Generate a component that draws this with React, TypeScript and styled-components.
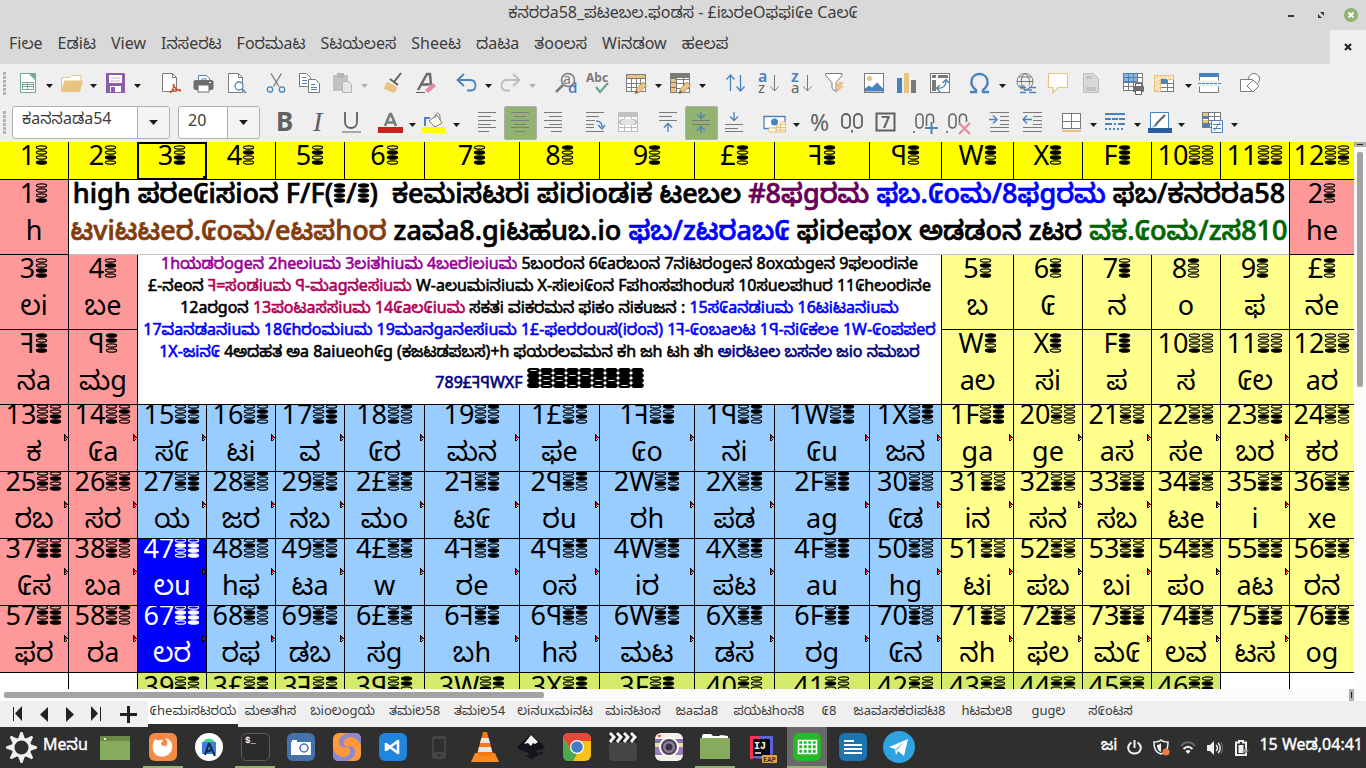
import React from 'react';
import styled, { createGlobalStyle, css } from 'styled-components';

const GlobalStyle = createGlobalStyle`
  * { box-sizing: border-box; }
  html, body { margin: 0; padding: 0; }
  body { overflow: hidden; }
  button, input { font: inherit; color: inherit; margin: 0; padding: 0; border: 0; background: none; }
`;

const Desktop = styled.div`
  display: flex;
  flex-direction: column;
  height: 100vh;
  background: #efefef;
  color: #3c3c3c;
  font-family: 'Noto Sans', 'Noto Sans Kannada', 'Open Sans', sans-serif;
  font-size: 16px;
`;

/* ---------- window frame ---------- */
const TitleBar = styled.header`
  display: grid;
  grid-template-columns: 1fr auto 1fr;
  height: 30px;
  background: #d9d9d9;
`;
const Title = styled.h1`
  grid-column: 2;
  margin: 0;
  font-size: 16px;
  font-weight: 400;
  line-height: 24px;
  white-space: nowrap;
`;
const WindowButtons = styled.div`
  display: flex;
  justify-content: flex-end;
  align-items: center;
  gap: 10px;
  padding-right: 5px;
`;
const WindowButton = styled.button`
  display: flex;
  align-items: center;
  justify-content: center;
  width: 20px;
  height: 20px;
`;
const MenuBar = styled.nav`
  display: flex;
  justify-content: space-between;
  height: 34px;
  background: #d9d9d9;
`;
const MenuList = styled.div`
  display: flex;
  gap: 15px;
  padding-left: 9px;
`;
const MenuButton = styled.button`
  height: 26px;
  line-height: 26px;
  white-space: nowrap;
`;
const CloseDocument = styled.button`
  display: flex;
  align-items: center;
  justify-content: center;
  width: 36px;
  background: #efefef;
`;

/* ---------- toolbars ---------- */
const Toolbar = styled.div`
  display: flex;
  align-items: center;
  height: 39px;
  flex: none;
`;
const Handle = styled.span`
  width: 3px;
  height: 23px;
  margin-left: 3px;
  margin-right: 5px;
  background: repeating-linear-gradient(#b4b4b4 0 3px, transparent 3px 4px);
`;
const ToolButton = styled.button<{ $on?: boolean }>`
  display: flex;
  align-items: center;
  justify-content: center;
  flex: none;
  width: 33px;
  height: 34px;
  border: 1px solid ${(p) => (p.$on ? '#adadad' : 'transparent')};
  border-radius: 2px;
  background: ${(p) => (p.$on ? '#92b372' : 'transparent')};
`;
const CaretButton = styled.button`
  display: flex;
  align-items: center;
  justify-content: center;
  flex: none;
  width: 11px;
  height: 34px;
  padding-top: 4px;
`;
const Gap = styled.span<{ $w: number }>`
  flex: none;
  width: ${(p) => p.$w}px;
`;
const Combo = styled.div<{ $w: number }>`
  display: flex;
  flex: none;
  width: ${(p) => p.$w}px;
  height: 33px;
  margin-right: 8px;
  border: 1px solid #b0b0b0;
  border-radius: 3px;
  overflow: hidden;
  background: #fff;
`;
const ComboInput = styled.input`
  flex: 1;
  min-width: 0;
  padding: 0 0 6px 9px;
  font-size: 16px;
`;
const ComboArrow = styled.button`
  display: flex;
  align-items: center;
  justify-content: center;
  width: 32px;
  border-left: 1px solid #b0b0b0;
  background: #f4f4f4;
`;

/* ---------- sheet ---------- */
const SheetArea = styled.main`
  display: flex;
  flex: 1 1 0;
  min-height: 0;
`;
const SheetView = styled.div`
  flex: 1;
  min-width: 0;
  overflow: hidden;
  background: #fff;
`;
const Table = styled.table`
  width: 100%;
  table-layout: fixed;
  border-collapse: separate;
  border-spacing: 0;
  color: #000;
`;
type Tone = 'yellow' | 'pink' | 'blue' | 'cream' | 'selected' | 'lime' | 'blank';
const tones: Record<Tone, string> = {
  yellow: '#ffff00',
  pink: '#ff9999',
  blue: '#99ccff',
  cream: '#ffff8c',
  selected: '#0000ff',
  lime: '#d4ea6b',
  blank: '#ffffff',
};
const Cell = styled.td<{ $tone: Tone; $gridLine?: boolean }>`
  position: relative;
  padding: 0;
  border-right: 1px solid #000;
  border-bottom: 1px solid ${(p) => (p.$gridLine ? '#c0c0c0' : '#000')};
  background: ${(p) => tones[p.$tone]};
  color: ${(p) => (p.$tone === 'selected' ? '#fff' : '#000')};
  &:last-child { border-right: 0; }
`;
const CellBody = styled.div<{ $h: number }>`
  display: flex;
  flex-direction: column;
  align-items: center;
  justify-content: center;
  height: ${(p) => p.$h}px;
  overflow: hidden;
`;
const lineBase = css`
  flex: none;
  white-space: pre;
`;
const CellLine = styled.div`
  ${lineBase}
  height: 37px;
  font-size: 27px;
  line-height: 26px;
`;
const HeadLine = styled(CellLine)`
  font-weight: 550;
  -webkit-text-stroke: 0.7px currentColor;
`;
const NoteLine = styled.div<{ $h: number }>`
  ${lineBase}
  height: ${(p) => p.$h}px;
  font-size: 16px;
  font-weight: 400;
  line-height: ${(p) => (p.$h > 22 ? 34 : 16)}px;
  -webkit-text-stroke: 0.6px currentColor;
`;
const Ink = styled.span<{ $c: string }>`
  color: ${(p) => p.$c};
`;
const DotSvg = styled.svg`
  display: inline-block;
  vertical-align: baseline;
`;
const Marker = styled.svg`
  position: absolute;
  right: 0;
  top: 29px;
`;
const CellCursor = styled.span`
  position: absolute;
  inset: 0 -1px -1px -1px;
  border: 2px solid #000;
  &::after {
    content: '';
    position: absolute;
    right: -3px;
    bottom: -3px;
    width: 5px;
    height: 5px;
    background: #000;
  }
`;
const VScroll = styled.div`
  display: flex;
  flex-direction: column;
  align-items: center;
  width: 12px;
  background: #fcfcfc;
`;
const VSplit = styled.div`
  display: flex;
  align-items: center;
  justify-content: center;
  width: 100%;
  height: 5px;
  margin-bottom: 5px;
  background: #b0b0b0;
  &::after { content: ''; width: 6px; height: 1px; background: #222; }
`;
const VThumb = styled.div`
  width: 6px;
  height: 43%;
  border-radius: 2px;
  background: #a3a3a3;
`;
const HScroll = styled.div`
  display: flex;
  align-items: center;
  justify-content: space-between;
  flex: none;
  height: 12px;
  padding-left: 4px;
  padding-right: 12px;
  background: #fcfcfc;
`;
const HThumb = styled.div`
  width: 40%;
  height: 6px;
  border-radius: 2px;
  background: #a3a3a3;
`;
const HSplit = styled.div`
  display: flex;
  align-items: center;
  justify-content: center;
  width: 5px;
  height: 12px;
  background: #b0b0b0;
  &::after { content: ''; width: 1px; height: 6px; background: #222; }
`;

/* ---------- sheet tabs ---------- */
const TabBar = styled.div`
  display: flex;
  flex: none;
  height: 26px;
  background: #efefef;
`;
const TabNav = styled.div`
  display: flex;
  align-items: center;
  width: 148px;
  padding-left: 5px;
`;
const TabNavButton = styled.button<{ $w?: number }>`
  display: flex;
  align-items: center;
  justify-content: center;
  width: ${(p) => p.$w ?? 26}px;
  height: 24px;
`;
const Tab = styled.button<{ $w: number; $active?: boolean }>`
  flex: none;
  width: ${(p) => p.$w}px;
  padding-bottom: 5px;
  font-size: 13px;
  line-height: 18px;
  white-space: nowrap;
  background: ${(p) => (p.$active ? '#fff' : 'transparent')};
  border-bottom: 3px solid ${(p) => (p.$active ? '#2e2e2e' : 'transparent')};
`;

/* ---------- desktop panel ---------- */
const Panel = styled.footer`
  display: flex;
  flex: none;
  align-items: stretch;
  height: 41px;
  background: #2f2f2f;
  color: #fff;
`;
const StartMenu = styled.button`
  display: flex;
  align-items: center;
  width: 97px;
  padding-left: 6px;
  gap: 6px;
`;
const PanelText = styled.span`
  height: 32px;
  line-height: 24px;
  white-space: nowrap;
  -webkit-text-stroke: 0.4px currentColor;
`;
const Launchers = styled.div`
  display: flex;
  gap: 6px;
  flex: 1;
`;
const Launcher = styled.button<{ $running?: boolean; $focus?: boolean }>`
  display: flex;
  align-items: center;
  justify-content: center;
  flex: none;
  width: 40px;
  border-bottom: 2px solid ${(p) => (p.$running ? '#92b372' : 'transparent')};
  background: ${(p) => (p.$focus ? '#696969' : 'transparent')};
`;
const Tray = styled.div`
  display: flex;
  align-items: center;
  gap: 7px;
  padding-right: 3px;
`;
const TrayButton = styled.button`
  display: flex;
  width: 20px;
  justify-content: center;
`;

/* ---------- drawing helpers ---------- */
const G = '#7a7a7a';
const B = '#4a82bd';
const O = '#eac282';
const K = '#606060';

const lines = (rows: [number, number, number][], c = G) =>
  rows.map(([x1, x2, y], i) => <path key={i} d={`M${x1} ${y}.5H${x2}`} stroke={c} />);

const grid = (x: number, y: number, w: number, h: number, cols: number, rows: number, c = G) => (
  <g stroke={c} fill="none">
    <rect x={x + 0.5} y={y + 0.5} width={w} height={h} fill="#fff" />
    {Array.from({ length: cols - 1 }, (_, i) => (
      <path key={'c' + i} d={`M${Math.round(x + ((i + 1) * w) / cols) + 0.5} ${y}v${h}`} />
    ))}
    {Array.from({ length: rows - 1 }, (_, i) => (
      <path key={'r' + i} d={`M${x} ${Math.round(y + ((i + 1) * h) / rows) + 0.5}h${w}`} />
    ))}
  </g>
);

const pencil = (
  <g>
    <path d="M9 20.500l1.500-5 6.500-6.500 3.500 3.500-6.500 6.500z" fill={O} stroke="#b48a4e" strokeWidth=".8" />
    <path d="M9 20.500l1-3.500 2.500 2.500z" fill={K} />
  </g>
);

const icons: Record<string, React.ReactNode> = {
  new: (
    <g fill="none" stroke="#76a797">
      <path d="M3.500 .5h11l4 4v15h-15z" fill="#fff" />
      <path d="M12 .5h6.500v6.500z" fill="#76a797" />
      <path d="M5.500 9.500h11v7h-11zM5.500 13.500h11M10.500 9.500v7M5.500 11.500h11" />
    </g>
  ),
  open: (
    <g stroke={O}>
      <path d="M.5 18.500v-14h8l2-2h9.500v8" fill="#fff" />
      <path d="M.5 18.500l3-10.500h18l-3 10.500z" fill={O} />
    </g>
  ),
  save: (
    <g>
      <path d="M1 0h18l1 1v19H1z" fill="#8e5bb0" />
      <path d="M4 2h13v8H4zM5 13h11v6H5z" fill="#fff" />
      <path d="M6 5h9M6 8h9" stroke="#c7aedb" />
      <path d="M6 14h4v5H6z" fill="#8e5bb0" />
    </g>
  ),
  pdf: (
    <g fill="none" stroke={G}>
      <path d="M2.500 .5h10l4 4v14h-14z" fill="#fff" />
      <path d="M12.500 .5v4h4" />
      <path d="M13 11c1 3 3 6 8 7M14 11c0 4-1 6-4 9M10 19c3-2 6-3 11-2" stroke="#cf4b2c" strokeWidth="1.300" />
    </g>
  ),
  print: (
    <g>
      <path d="M5.500 8V2.500h8l3 3V8" fill="#fff" stroke={B} />
      <path d="M8 6h6" stroke={B} />
      <rect y="7" x=".5" width="20" height="10" rx="2" fill="#6d6d6d" />
      <path d="M5 12h11v7H5z" fill="#fff" stroke="#6d6d6d" />
      <path d="M16 9.500h2" stroke="#fff" />
    </g>
  ),
  preview: (
    <g fill="none">
      <path d="M2.500 .5h10l4 4v15h-14z" fill="#fff" stroke={G} />
      <path d="M12.500 .5v4h4" stroke={G} />
      <circle cx="13" cy="13" r="4" fill="#fff" stroke={B} strokeWidth="1.300" />
      <path d="M16 16l4 4" stroke={B} strokeWidth="1.600" />
    </g>
  ),
  cut: (
    <g fill="none" strokeWidth="1.300">
      <path d="M5 .5l8 13M15.500 .5l-8 13" stroke={G} />
      <circle cx="4" cy="16.500" r="2.700" stroke={B} />
      <circle cx="16" cy="16.500" r="2.700" stroke={B} />
    </g>
  ),
  copy: (
    <g fill="#fff" stroke={G}>
      <path d="M.5 .5h7l4 4v9h-11z" />
      <path d="M9.500 6.500h7l4 4v9h-11z" />
      <path d="M3 4.500h4M3 7.500h5M3 10.500h5M12 11.500h4M12 14.500h6M12 16.500h6" stroke={B} />
    </g>
  ),
  paste: (
    <g>
      <path d="M1 2h15v16H1z" fill="#c2c2c2" />
      <path d="M5 0h7v5H5z" fill="#b4b4b4" />
      <path d="M10.500 8.500h6l3 3v8h-9z" fill="#e6e6e6" stroke="#b4b4b4" />
    </g>
  ),
  brush: (
    <g>
      <path d="M18 0l-7 9M7 6l8 6" stroke={K} strokeWidth="2" />
      <path d="M5 9c-2 0-3 3-4 7l10 4c2-2 3-4 3-6z" fill={O} />
    </g>
  ),
  clear: (
    <g>
      <path d="M2 17L11 1h3l1 11M5.500 11.500h8" stroke="#6a6a6a" strokeWidth="2.500" fill="none" />
      <path d="M0 19.500h9" stroke={K} />
      <path d="M9 17l8-7 3 3-8 7z" fill="#e8889b" />
    </g>
  ),
  undo: (
    <g fill="none" stroke={B} strokeWidth="1.800">
      <path d="M1.500 7H15c6 1 6 10 0 10.500h-4" />
      <path d="M8 1L1.500 7 8 13" />
    </g>
  ),
  redo: (
    <g fill="none" stroke="#bcbcbc" strokeWidth="1.800">
      <path d="M19.500 7H6c-6 1-6 10 0 10.500h4" />
      <path d="M13 1l6.500 6L13 13" />
    </g>
  ),
  find: (
    <g fill="none" stroke={G}>
      <circle cx="13" cy="7" r="6.500" strokeWidth="1.500" />
      <path d="M8 12l-7 7" strokeWidth="2.500" />
      <text x="8" y="11" fontSize="14" fill={G} stroke="none">a</text>
      <text x="13" y="20" fontSize="15" fontWeight="600" fill={B} stroke="none">d</text>
    </g>
  ),
  spell: (
    <g>
      <text x="-2" y="9" fontSize="12" fontWeight="700" fill={G}>Abc</text>
      <path d="M8 14l4 5 8-9" stroke="#69a58c" strokeWidth="2.200" fill="none" />
    </g>
  ),
  row: (
    <g>
      {grid(0, 1, 19, 17, 4, 4)}
      <path d="M.5 1.500h19v4H.5z" fill={O} stroke={G} />
      {pencil}
    </g>
  ),
  col: (
    <g>
      {grid(0, 1, 19, 18, 3, 4)}
      <path d="M0 0h20v5H0z" fill={G} />
      <path d="M.5 5.500h6v14h-6zM.5 9.500h6M.5 14.500h6" fill={O} stroke={G} />
      {pencil}
    </g>
  ),
  sort: (
    <g fill="none" stroke={B} strokeWidth="1.300">
      <path d="M5.500 18V2M1.500 6.500l4-4.500 4 4.500M15.500 2v16M11.500 13.500l4 4.500 4-4.500" />
    </g>
  ),
  az: (
    <g>
      <text x="0" y="9" fontSize="16" fontWeight="600" fill={B}>a</text>
      <text x="0" y="20" fontSize="15" fill={K}>z</text>
      <path d="M16.500 2v16M12.500 13.500l4 4.500 4-4.500" fill="none" stroke={G} />
    </g>
  ),
  za: (
    <g>
      <text x="0" y="9" fontSize="16" fontWeight="600" fill={B}>z</text>
      <text x="0" y="20" fontSize="15" fill={K}>a</text>
      <path d="M16.500 2v16M12.500 13.500l4 4.500 4-4.500" fill="none" stroke={G} />
    </g>
  ),
  filter: (
    <g>
      <path d="M1.500 .5h16.500v2l-6 7v9l-4-3v-6l-6.500-7z" fill="#fff" stroke={G} />
      <path d="M15 9h5l-3 4h3l-8 7 2-6h-3z" fill={O} />
    </g>
  ),
  image: (
    <g>
      <rect x=".5" y=".5" width="19" height="19" fill="#fff" stroke={G} />
      <circle cx="5.500" cy="5.500" r="2.500" fill={O} />
      <path d="M1 18.500v-3l4-3 3 2 5-5 6 6v3z" fill={B} />
    </g>
  ),
  chart: (
    <g>
      <path d="M0 5h5v15H0z" fill={B} />
      <path d="M7 0h5v20H7z" fill={O} />
      <path d="M14 7h5v13h-5z" fill={G} />
    </g>
  ),
  pivot: (
    <g fill="none" stroke={G}>
      <rect x=".5" y=".5" width="19" height="19" fill="#fff" />
      <path d="M2 2h4v3H2zM8 2h10v3H8zM2 7h4v11H2z" fill={G} stroke="none" />
      <path d="M7 15c6 1 9-2 9-8M10 12l-3.500 3 3.500 4M12.500 10L16 6.500 19 10" stroke={B} strokeWidth="1.300" />
    </g>
  ),
  omega: (
    <path
      d="M0 19h6v-2C2 14 1 11 1.500 8 2 3.500 5.500 1 9.500 1s7.500 2.500 8 7c.5 3-.5 6-4.500 9v2h6"
      fill="none"
      stroke={B}
      strokeWidth="2.400"
    />
  ),
  link: (
    <g fill="none" stroke={G}>
      <circle cx="8" cy="8.500" r="8" />
      <path d="M0 8.500h16M2 4h12M2 13h6M8 .5c-5 4-5 11 0 16M8 .5c5 4 5 9 4 12" />
      <path d="M3 14.500h6M12 14.500h7M7 17h8M3 19.500h6M12 19.500h7" stroke={B} strokeWidth="1.600" />
    </g>
  ),
  comment: <path d="M-1.500 .5h19v14H8l-5 5v-5h-4.500z" fill="#fff" stroke={O} strokeWidth="1.200" />,
  headfoot: (
    <g>
      <path d="M.5 .5h10l5 5v14H.5z" fill="#d8d8d8" stroke="#bdbdbd" />
      <path d="M3 3h6v3H3zM3 14h10v4H3z" fill="#c2c2c2" />
    </g>
  ),
  printarea: (
    <g>
      {grid(0, 0, 19, 17, 4, 4)}
      <path d="M.5 .5h14v8H.5zM5.500 .5v8M10.500 .5v8M.5 4.500h14" fill="#8eb4de" stroke={B} />
      <rect x="10" y="13" width="11" height="6" rx="1" fill="#6d6d6d" />
      <path d="M12.500 13v-2.500h6V13M12.500 17.500h6v4h-6z" fill="#fff" stroke={K} />
    </g>
  ),
  freeze: (
    <g>
      {grid(-2, 2, 19, 16, 3, 4)}
      <path d="M-1.500 2.500h19v4h-13v12h-6z" fill="#fbe9c9" stroke={O} />
      <path d="M-1 6l4-4 4 4 4-4 4 4M-1 10l5-3M-1 14l5-4M-1 18l5-4" stroke={O} fill="none" />
      <path d="M5 6h6v4H5z" fill={B} />
    </g>
  ),
  split: (
    <g>
      <path d="M-1.500 .5h19v8h-19zM-1.500 12.500h19v7h-19z" fill="#fff" stroke={G} />
      <path d="M-2 0h20v4H-2z" fill={B} />
      <path d="M-2 8.500h20M-2 12.500h20" stroke="#efefef" strokeWidth="2" />
      <path d="M-3 10.500h23" stroke={B} strokeDasharray="3 1" />
    </g>
  ),
  shapes: (
    <g fill="#fff" stroke={G}>
      <circle cx="13" cy="6" r="5.500" />
      <path d="M-.5 6.500h12v12h-12z" />
      <path d="M12 7l6 6-6 6-6-6z" />
    </g>
  ),
  bold: <text x="0" y="19" fontSize="26" fontWeight="700" fill={K}>B</text>,
  italic: <text x="4" y="19" fontSize="28" fontStyle="italic" fontFamily="Liberation Serif, serif" fill={K}>I</text>,
  underline: (
    <g fill="none" stroke={K}>
      <path d="M3 0v10c0 8 12 8 12 0V0" strokeWidth="1.800" />
      <path d="M0 20h19" />
    </g>
  ),
  color: (
    <g>
      <path d="M5 14l5-12h1l5 12M7 10.500h7" stroke={G} strokeWidth="2.600" fill="none" />
      <path d="M-2 15h25v6H-2z" fill="#c9211e" />
    </g>
  ),
  fill: (
    <g>
      <path d="M1 14V6h5" stroke={B} strokeWidth="2" fill="none" />
      <path d="M5 9l8-6 5 8-7 4z" fill="#fff" stroke={G} />
      <path d="M11 6c0-7 6-7 5 2" fill="none" stroke={G} />
      <path d="M-2 15h24v6H-2z" fill="#ffff00" />
    </g>
  ),
  left: <g>{lines([[1, 19, 0], [1, 14, 4], [1, 19, 8], [1, 14, 12], [1, 19, 15], [1, 12, 19]])}</g>,
  center: <g>{lines([[1, 19, 0], [4, 16, 4], [1, 19, 8], [4, 16, 12], [1, 19, 15], [5, 15, 19]])}</g>,
  right: <g>{lines([[1, 19, 0], [6, 19, 4], [1, 19, 8], [6, 19, 12], [1, 19, 15], [8, 19, 19]])}</g>,
  wrap: (
    <g>
      {lines([[1, 19, 0], [1, 14, 4], [1, 10, 8], [1, 9, 12], [1, 9, 15], [1, 19, 19]])}
      <path d="M11 9c5 0 6 3 6 6M13 13l4 4 3-4" stroke={B} fill="none" strokeWidth="1.400" />
    </g>
  ),
  merge: (
    <g>
      {grid(0, 0, 19, 19, 3, 5, '#bdbdbd')}
      <path d="M0 0h20v5H0z" fill="#c2c2c2" />
      <path d="M1 7h18v6H1z" fill="#e4e4e4" />
      <path d="M5 7l-4 3 4 3M15 7l4 3-4 3" stroke="#a9a9a9" fill="none" />
    </g>
  ),
  top: (
    <g>
      {lines([[1, 19, 0], [1, 14, 4], [1, 19, 8]])}
      <path d="M10 20v-8M6 15.500l4-4 4 4" stroke={B} fill="none" strokeWidth="1.300" />
    </g>
  ),
  middle: (
    <g>
      {lines([[1, 19, 8], [1, 19, 12]])}
      <path d="M10 0v6M6 2.500l4 4 4-4M10 21v-6M6 18.500l4-4 4 4" stroke={B} fill="none" strokeWidth="1.300" />
    </g>
  ),
  bottom: (
    <g>
      {lines([[1, 19, 12], [1, 14, 16], [1, 19, 19]])}
      <path d="M10 0v8M6 4.500l4 4 4-4" stroke={B} fill="none" strokeWidth="1.300" />
    </g>
  ),
  currency: (
    <g>
      <path d="M0 4.500h21v12H0z" fill="#fff" stroke={B} strokeWidth="1.300" />
      <circle cx="10.500" cy="10" r="3.500" fill={B} />
      <path d="M12.500 13h4v7h-4zM16.500 10h5v10h-5zM5 16h7v4H5z" fill="#fff6e4" stroke={O} />
      <path d="M12.500 15.500h9M12.500 18h9M16.500 12.500h5" stroke={O} />
    </g>
  ),
  percent: <text x="1" y="19" fontSize="23" fill={K}>%</text>,
  number: (
    <g fill="none" stroke={K} strokeWidth="1.800">
      <rect x="0" y="2" width="8" height="14" rx="4" />
      <rect x="12" y="2" width="8" height="14" rx="4" />
      <path d="M10 18v2.500" />
    </g>
  ),
  date: (
    <g>
      <path d="M1.500 1.500h18v17h-18z" fill="none" stroke={K} strokeWidth="2" />
      <text x="6" y="16" fontSize="16" fontWeight="600" fill={K}>7</text>
    </g>
  ),
  adddec: (
    <g fill="none" stroke={K} strokeWidth="1.500">
      <path d="M-1 19v2" />
      <rect x="1" y="2" width="7" height="14" rx="3.500" />
      <path d="M11.500 14V6c0-5 7-5 7 0v5" />
      <path d="M16.500 10v12M10 16h13" stroke={B} strokeWidth="2" />
    </g>
  ),
  deldec: (
    <g fill="none" stroke={K} strokeWidth="1.500">
      <path d="M-1 19v2" />
      <rect x="1" y="2" width="7" height="14" rx="3.500" />
      <path d="M11.500 13V6c0-5 7-5 7 0v4" />
      <path d="M11 11l11 11M22 11L11 22" stroke="#e8889b" strokeWidth="2" />
    </g>
  ),
  indent: (
    <g>
      {lines([[2, 21, 0], [12, 21, 4], [12, 21, 8], [12, 21, 12], [2, 21, 15], [2, 21, 19]])}
      <path d="M1 7.500h8M5 3.500l4 4-4 4" stroke={B} fill="none" strokeWidth="1.400" />
    </g>
  ),
  outdent: (
    <g>
      {lines([[2, 21, 0], [12, 21, 4], [12, 21, 8], [12, 21, 12], [2, 21, 15], [2, 21, 19]])}
      <path d="M2 7.500h9M6 3.500l-4 4 4 4" stroke={B} fill="none" strokeWidth="1.400" />
    </g>
  ),
  borders: (
    <g>
      {grid(1, 1, 18, 15, 2, 2)}
      <path d="M1 18h19v2H1z" fill={O} />
    </g>
  ),
  linestyle: (
    <g stroke={B} strokeWidth="2">
      <path d="M0 2h20" />
      <path d="M0 7h20" strokeDasharray="6 1" />
      <path d="M0 12h20" strokeDasharray="7 2 2 2" />
      <path d="M0 17h20" strokeDasharray="2 2" />
    </g>
  ),
  linecolor: (
    <g>
      <path d="M1.500 .5h18v16h-18z" fill="#fff" stroke={B} />
      <path d="M16 3L7 12" stroke={K} strokeWidth="2" />
      <path d="M3 16l4-5 2 2z" fill={B} />
      <path d="M-1 16h24v5H-1z" fill="#2a6099" />
    </g>
  ),
  condition: (
    <g>
      {grid(0, 0, 18, 15, 3, 4)}
      <path d="M1 1h5v3H1zM1 8h5v3H1z" fill={O} />
      <path d="M1 5h5v2H1zM1 12h7v3H1z" fill={B} />
      <path d="M9.500 8.500h11v12h-11z" fill="#fff" stroke={B} />
      <path d="M11 12.500h8M11 16.500h8M18 10l-6 9" stroke={B} />
    </g>
  ),
};

const Icon = ({ name }: { name: string }) => (
  <svg width="21" height="21" viewBox="0 0 21 21" overflow="visible" aria-hidden="true">
    {icons[name]}
  </svg>
);

const Caret = ({ dim, big }: { dim?: boolean; big?: boolean }) => (
  <svg width={big ? 9 : 7} height={big ? 5 : 4} viewBox="0 0 7 4" aria-hidden="true">
    <path d="M0 0h7L3.500 4z" fill={dim ? '#b4b4b4' : '#1a1a1a'} />
  </svg>
);

type Tool = [name: string, label: string, kind?: 'menu' | 'dim' | 'on'] | number;

const Tools = ({ items }: { items: Tool[] }) => (
  <>
    {items.map((t, i) =>
      typeof t === 'number' ? (
        <Gap key={i} $w={t} />
      ) : (
        <React.Fragment key={i}>
          <ToolButton aria-label={t[1]} $on={t[2] === 'on'}>
            <Icon name={t[0]} />
          </ToolButton>
          {(t[2] === 'menu' || t[2] === 'dim') && (
            <CaretButton aria-label={`${t[1]} options`}>
              <Caret dim={t[2] === 'dim'} />
            </CaretButton>
          )}
        </React.Fragment>
      ),
    )}
  </>
);

const standardTools: Tool[] = [
  ['new', 'New', 'menu'], ['open', 'Open', 'menu'], ['save', 'Save', 'menu'], 11,
  ['pdf', 'Export as PDF'], ['print', 'Print'], ['preview', 'Print preview'], 7,
  ['cut', 'Cut'], ['copy', 'Copy'], ['paste', 'Paste', 'dim'], 7,
  ['brush', 'Clone formatting'], ['clear', 'Clear formatting'], 7,
  ['undo', 'Undo', 'menu'], ['redo', 'Redo', 'dim'], 11,
  ['find', 'Find and replace'], ['spell', 'Spelling'], 5,
  ['row', 'Row', 'menu'], ['col', 'Column', 'menu'], 11,
  ['sort', 'Sort'], ['az', 'Sort ascending'], ['za', 'Sort descending'], ['filter', 'AutoFilter'], 7,
  ['image', 'Insert image'], ['chart', 'Insert chart'], ['pivot', 'Pivot table'], 7,
  ['omega', 'Special character', 'menu'], 3,
  ['link', 'Hyperlink'], ['comment', 'Comment'], ['headfoot', 'Headers and footers'], 7,
  ['printarea', 'Define print area'], ['freeze', 'Freeze rows and columns', 'menu'], 1,
  ['split', 'Split window'], 7, ['shapes', 'Draw functions'],
];

const formatTools: Tool[] = [
  ['bold', 'Bold'], ['italic', 'Italic'], ['underline', 'Underline'], 5,
  ['color', 'Font color', 'menu'], ['fill', 'Background color', 'menu'], 9,
  ['left', 'Align left'], ['center', 'Center horizontally', 'on'], ['right', 'Align right'], 9,
  ['wrap', 'Wrap text'], ['merge', 'Merge cells'], 7,
  ['top', 'Align top'], ['middle', 'Center vertically', 'on'], ['bottom', 'Align bottom'], 7,
  ['currency', 'Currency', 'menu'], 1,
  ['percent', 'Percent'], ['number', 'Number'], ['date', 'Date'], 7,
  ['adddec', 'Add decimal place'], ['deldec', 'Delete decimal place'], 7,
  ['indent', 'Increase indent'], ['outdent', 'Decrease indent'], 7,
  ['borders', 'Borders', 'menu'], ['linestyle', 'Border style', 'menu'], ['linecolor', 'Border color', 'menu'], 9,
  ['condition', 'Conditional formatting', 'menu'],
];

/* ---------- sheet contents ---------- */
const DIGITS = '0123456789£ꟻꟼWXF';

/* Each base-16 digit is shown as a stack of four bits, highest on top. */
const Bits = ({ of, heavy }: { of: string; heavy?: boolean }) => (
  <>
    {[...of].map((ch, i) => {
      const value = DIGITS.indexOf(ch);
      return (
        <DotSvg key={i} width="13" height="20" viewBox="0 0 13 20" aria-hidden="true">
          {[8, 4, 2, 1].map((bit, row) => (
            <ellipse
              key={bit}
              cx="6.500"
              cy={2.5 + row * 5}
              rx={heavy ? 5.2 : 5.1}
              ry={heavy ? 1.8 : 1.7}
              stroke="currentColor"
              strokeWidth={heavy ? 2.4 : 1.2}
              fill={value & bit ? 'currentColor' : 'none'}
            />
          ))}
        </DotSvg>
      );
    })}
  </>
);

const NumberLine = ({ n }: { n: string }) => (
  <CellLine>
    {n}
    <Bits of={n} />
  </CellLine>
);

const Element = ({ n, s, tone, h = 66, note }: { n: string; s: string; tone: Tone; h?: number; note?: boolean }) => (
  <Cell $tone={tone}>
    <CellBody $h={h}>
      <NumberLine n={n} />
      <CellLine>{s}</CellLine>
    </CellBody>
    {note && (
      <Marker width="4" height="7" viewBox="0 0 4 7" aria-hidden="true">
        <path d="M0 0h1v7H0zM1 1h1v1H1zM2 2h1v1H2zM3 3h1v1H3zM2 5h1v1H2zM1 6h1v1H1z" fill="#000" />
        <path d="M1 2h1v3H1zM2 3h1v1H2z" fill="#ff0000" />
      </Marker>
    )}
  </Cell>
);

const widths = [69, 69, 69, 69, 69, 80, 95, 80, 95, 80, 95, 72, 72, 69, 69, 69, 69, 64];
const headings = '1 2 3 4 5 6 7 8 9 £ ꟻ ꟼ W X F 10 11 12'.split(' ');

const periods = [
  '13 ಕ,14 ₢a,15 ಸ₢,16 ಟi,17 ವ,18 ₢ರ,19 ಮನ,1£ ಫe,1ꟻ ₢o,1ꟼ ನi,1W ₢u,1X ಜನ,1F ga,20 ge,21 aಸ,22 ಸe,23 ಬರ,24 ಕರ',
  '25 ರಬ,26 ಸರ,27 ಯ,28 ಜರ,29 ನಬ,2£ ಮo,2ꟻ ಟ₢,2ꟼ ರu,2W ರh,2X ಪಡ,2F ag,30 ₢ಡ,31 iನ,32 ಸನ,33 ಸಬ,34 ಟe,35 i,36 xe',
  '37 ₢ಸ,38 ಬa,47 ಲu,48 hಫ,49 ಟa,4£ w,4ꟻ ರe,4ꟼ oಸ,4W iರ,4X ಪಟ,4F au,50 hg,51 ಟi,52 ಪಬ,53 ಬi,54 ಪo,55 aಟ,56 ರನ',
  '57 ಫರ,58 ರa,67 ಲರ,68 ರಫ,69 ಡಬ,6£ ಸg,6ꟻ ಬh,6ꟼ hಸ,6W ಮಟ,6X ಡಸ,6F ರg,70 ₢ನ,71 ನh,72 ಫಲ,73 ಮ₢,74 ಲವ,75 ಟಸ,76 og',
].map((row) => row.split(',').map((c) => c.split(' ')));

const toneFor = (row: number, col: number): Tone => {
  if (col < 2) return 'pink';
  if (col === 2 && row > 1) return 'selected';
  return col < 12 ? 'blue' : 'cream';
};

const lastRow = ['', '', '39', '3£', '3ꟻ', '3ꟼ', '3W', '3X', '3F', '40', '41', '42', '43', '44', '45', '46', '', ''];

const purple = '#990099';
const crimson = '#b00055';
const blue = '#0000ff';
const navy = '#000080';

const Sheet = () => (
  <Table>
    <colgroup>
      {widths.map((w, i) => (
        <col key={i} width={w} />
      ))}
    </colgroup>
    <tbody>
      <tr>
        {headings.map((n, i) => (
          <Cell key={n} $tone="yellow">
            <CellBody $h={37}>
              <NumberLine n={n} />
            </CellBody>
            {i === 2 && <CellCursor />}
          </Cell>
        ))}
      </tr>
      <tr>
        <Element n="1" s="h" tone="pink" h={74} />
        <Cell $tone="blank" colSpan={16} $gridLine>
          <CellBody $h={74}>
            <HeadLine>
              high ಪರe₢iಸioನ F/F(<Bits of="F" />/<Bits of="F" />){'  '}ಕeಮiಸಟರi ಪiರioಡiಕ ಟeಬಲ{' '}
              <Ink $c="#660055">#8ಫgರಮ</Ink> <Ink $c={blue}>ಫಬ.₢oಮ/8ಫgರಮ</Ink> ಫಬ/ಕನರರa58
            </HeadLine>
            <HeadLine>
              <Ink $c="#843c0c">ಟviಟಟeರ.₢oಮ/eಟಪhoರ</Ink> zaವa8.giಟಹuಬ.io <Ink $c={blue}>ಫಬ/zಟರaಬ₢</Ink>
              {' '}ಫiರeಫox ಅಡಡoನ zಟರ <Ink $c="#006600">ವಕ.₢oಮ/zಸ810</Ink>
            </HeadLine>
          </CellBody>
        </Cell>
        <Element n="2" s="he" tone="pink" h={74} />
      </tr>
      <tr>
        <Element n="3" s="ಲi" tone="pink" h={74} />
        <Element n="4" s="ಬe" tone="pink" h={74} />
        <Cell $tone="blank" colSpan={10} rowSpan={2}>
          <CellBody $h={149}>
            <NoteLine $h={22}>
              <Ink $c={purple}>1hಯಡರogeನ 2heಲiuಮ 3ಲiತhiuಮ 4ಬeರiಲiuಮ</Ink> 5ಬoರoನ 6₢aರಬoನ 7ನiಟರogeನ 8oxಯgeನ 9ಫಲoರiನe
            </NoteLine>
            <NoteLine $h={22}>
              £-ನeoನ <Ink $c={crimson}>ꟻ=ಸoಡiuಮ ꟼ-ಮagನeಸiuಮ</Ink> W-aಲuಮiನiuಮ X-ಸiಲi₢oನ Fಪhoಸಪhoರuಸ 10ಸuಲಪhuರ 11₢hಲoರiನe
            </NoteLine>
            <NoteLine $h={22}>
              12aರgoನ <Ink $c={crimson}>13ಪoಟaಸಸiuಮ 14₢aಲ₢iuಮ</Ink> ಸಕತi ವiಕರಮನ ಫiಕo ನiಕuಜನ :{' '}
              <Ink $c={blue}>15ಸ₢aನಡiuಮ 16ಟiಟaನiuಮ</Ink>
            </NoteLine>
            <NoteLine $h={22}>
              <Ink $c={blue}>17ವaನಡaನiuಮ 18₢hರoಮiuಮ 19ಮaನgaನeಸiuಮ 1£-ಫeರರouಸ(iರoನ) 1ꟻ-₢oಬaಲಟ 1ꟼ-ನi₢ಕಲe 1W-₢oಪಪeರ</Ink>
            </NoteLine>
            <NoteLine $h={22}>
              <Ink $c={blue}>1X-ಜiನ₢</Ink> 4ಅದಹತ ಅa 8aiueoh₢g (ಕಜಟಡಪಬಸ)+h ಫಯರಲವಮನ ಕh ಜh ಟh ತh{' '}
              <Ink $c={navy}>ಅiರಟeಲ ಬಸನಲ ಜio ನಮಬರ</Ink>
            </NoteLine>
            <NoteLine $h={39}>
              <Ink $c={navy}>789£ꟻꟼWXF</Ink> <Bits of="789£ꟻꟼWXF" heavy />
            </NoteLine>
          </CellBody>
        </Cell>
        {[['5', 'ಬ'], ['6', '₢'], ['7', 'ನ'], ['8', 'o'], ['9', 'ಫ'], ['£', 'ನe']].map(([n, s]) => (
          <Element key={n} n={n} s={s} tone="cream" h={74} />
        ))}
      </tr>
      <tr>
        <Element n="ꟻ" s="ನa" tone="pink" h={74} />
        <Element n="ꟼ" s="ಮg" tone="pink" h={74} />
        {[['W', 'aಲ'], ['X', 'ಸi'], ['F', 'ಪ'], ['10', 'ಸ'], ['11', '₢ಲ'], ['12', 'aರ']].map(([n, s]) => (
          <Element key={n} n={n} s={s} tone="cream" h={74} />
        ))}
      </tr>
      {periods.map((cells, r) => (
        <tr key={r}>
          {cells.map(([n, s], c) => (
            <Element key={n} n={n} s={s} tone={toneFor(r, c)} note={c < 17} />
          ))}
        </tr>
      ))}
      <tr>
        {lastRow.map((n, i) => (
          <Cell key={i} $tone={n ? 'lime' : 'blank'}>
            <CellBody $h={74}>{n && <><NumberLine n={n} /><CellLine /></>}</CellBody>
          </Cell>
        ))}
      </tr>
    </tbody>
  </Table>
);

const menus = ['Fiಲe', 'Eಡiಟ', 'View', 'Iನಸeರಟ', 'Foರಮaಟ', 'Sಟಯಲeಸ', 'Sheeಟ', 'ದaಟa', 'ತooಲಸ', 'Wiನಡow', 'ಹeಲಪ'];

const tabs: [string, number][] = [
  ['₢heಮiಸಟರಯ', 90], ['ಮಅತhಸ', 65], ['ಬioಲogಯ', 79], ['ತಮiಲ58', 65], ['ತಮiಲ54', 65], ['ಲiನuxಮiನಟ', 86],
  ['ಮiನಟoಸ', 70], ['ಜaವa8', 58], ['ಪಯಟhoನ8', 86], ['₢8', 34], ['ಜaವaಸಕರiಪಟ8', 107], ['hಟಮಲ8', 68],
  ['gugಲ', 55], ['ಸ₢oಟಸ', 69],
];

/* ---------- launcher drawings, on a 28 by 28 field ---------- */
const tile = (fill: string) => <rect x="0" y="0" width="28" height="28" rx="6" fill={fill} />;

const folder = (
  <g>
    <path d="M1 3l1-2h8l2 2h6l2-1 7 1v4H1z" fill="#fff" />
    <rect x="-1" y="5" width="30" height="21" rx="1" fill="#87ab5c" />
  </g>
);

const swirl = (
  <path d="M14 14C9 17 3 11 7 5c2-3 6-5 10-5h5c4 0 6 2 6 6v7C26 6 19 2 14 5c-4 2-5 7 0 9z" fill="#8f87d0" />
);

const launchers: { label: string; art: React.ReactNode; running?: boolean; focus?: boolean }[] = [
  {
    label: 'Show desktop',
    art: (
      <g>
        <rect x="-3" y="3" width="30" height="24" fill="#87ab5c" />
        <rect x="-3" y="3" width="30" height="5" fill="#6a8a45" />
        <rect x="1" y="5" width="2" height="2" fill="#fff" />
      </g>
    ),
  },
  {
    label: 'Firefox',
    running: true,
    art: (
      <g>
        {tile('#f58a45')}
        <path d="M6 6c1 2 3 1 5 1 4-1 3 2 1 3 0 3 3 4 6 2 1-3 0-5-2-7 6 1 8 6 7 11-2 9-16 11-19 1-1-4 0-8 2-11z" fill="#fff" />
      </g>
    ),
  },
  {
    label: 'Android Studio',
    art: (
      <g>
        <circle cx="14" cy="14" r="14" fill="#fff" />
        <path d="M8 10c1-6 11-6 12 0z" fill="#3ddc84" />
        <path d="M7 9h14v12H7z" fill="#3f7de0" />
        <path d="M14 10l-4 12M14 10l6 13M11 18c2 1 5 0 6-3" stroke="#0b2b45" strokeWidth="2" fill="none" />
      </g>
    ),
  },
  {
    label: 'Terminal',
    running: true,
    art: (
      <g>
        <rect x=".5" y=".5" width="28" height="27" rx="5" fill="#2b2b2b" stroke="#5c5c5c" />
        <text x="4" y="10" fontSize="9" fontWeight="700" fontFamily="Liberation Mono, monospace" fill="#fff">$_</text>
      </g>
    ),
  },
  {
    label: 'Screenshot',
    art: (
      <g>
        {tile('#4472ad')}
        <path d="M5 7h5v2h14v13H4V9h1z" fill="#fff" />
        <circle cx="17" cy="15" r="4" fill="#fff" stroke="#4472ad" strokeWidth="1.500" />
      </g>
    ),
  },
  {
    label: 'Spiral',
    art: (
      <g>
        {tile('#ff9a3c')}
        {swirl}
        <g transform="rotate(180 14 14)">{swirl}</g>
      </g>
    ),
  },
  {
    label: 'Visual Studio Code',
    art: (
      <g>
        {tile('#2285dd')}
        <path d="M7 11l12 9V8L7 17M7 10v8" stroke="#fff" strokeWidth="2.600" fill="none" strokeLinejoin="round" />
      </g>
    ),
  },
  {
    label: 'Phone',
    art: (
      <g>
        <rect x="7" y="3" width="14" height="23" rx="2" fill="#444" />
        <rect x="9" y="6" width="10" height="13" fill="#2f2f2f" />
        <circle cx="14" cy="22.500" r="1.500" fill="#2f2f2f" />
      </g>
    ),
  },
  {
    label: 'VLC',
    art: (
      <g>
        <path d="M4 20h20l4 9H0z" fill="#f78b1f" />
        <path d="M12 -1h4l6 22c-3 3-13 3-16 0z" fill="#f47b12" />
        <path d="M10.500 5h7l1.500 5H9zM8 14h12l1 5H7z" fill="#e8e8e8" />
      </g>
    ),
  },
  {
    label: 'Inkscape',
    art: (
      <g>
        <path d="M14 1L28 14c0 3-8 2-9 4l3 3c-3 4-7 3-6 6l-7-4 3-2c-1-3-11-3-12-7z" fill="#14141c" />
        <path d="M14 2l7 7-3 2-2-1-2 3-3-3-4 1z" fill="#f4f4f4" />
        <circle cx="24" cy="20" r="1.500" fill="#14141c" />
      </g>
    ),
  },
  {
    label: 'Chrome',
    art: (
      <g>
        {tile('#fbc116')}
        <path d="M6 0h16c4 0 6 3 6 8H14L8 17 0 5c0-3 2-5 6-5z" fill="#e5473b" />
        <path d="M0 5l9 14 5 2-4 7H6c-4 0-6-2-6-6z" fill="#4ba84c" />
        <circle cx="14" cy="14" r="7" fill="#fff" />
        <circle cx="14" cy="14" r="5.800" fill="#3f7fc4" />
      </g>
    ),
  },
  {
    label: 'Video editor',
    art: (
      <g>
        <rect x="0" y="9" width="28" height="19" rx="4" fill="#454545" />
        <path d="M0 0h28v9H0z" fill="#222" />
        <path d="M1 0l4 4-4 5M8 0l4 4-4 5M15 0l4 4-4 5M22 0l4 4-4 5" stroke="#f4f4f4" strokeWidth="3" fill="none" />
      </g>
    ),
  },
  {
    label: 'Camera',
    art: (
      <g>
        {tile('#f4f0ea')}
        <path d="M0 6h28v4H0z" fill="#8c6fb0" />
        <path d="M0 10h28v4H0z" fill="#e8e3a0" />
        <path d="M0 14h28v8H0z" fill="#9a7cba" />
        <circle cx="14" cy="14" r="10" fill="#fff" />
        <circle cx="14" cy="14" r="7" fill="#8a7f92" stroke="#4a3f55" strokeWidth="2" />
        <circle cx="14" cy="14" r="3.500" fill="#3c3048" />
        <rect x="3" y="2" width="3" height="2" fill="#e85040" />
      </g>
    ),
  },
  { label: 'Files', running: true, art: folder },
  {
    label: 'IntelliJ IDEA',
    art: (
      <g>
        <path d="M3 3h12l-9 23H3z" fill="#fe315d" />
        <path d="M13 3h13v18L14 26 6 25z" fill="#5a63d8" />
        <rect x="6" y="6" width="17" height="17" fill="#0a0a0a" />
        <text x="7" y="16" fontSize="10" fontWeight="700" fontFamily="Liberation Mono, monospace" fill="#fff">IJ</text>
        <path d="M8 20h6" stroke="#fff" strokeWidth="1.500" />
        <rect x="15" y="22" width="15" height="8" rx="1" fill="#e8a33d" />
        <text x="16" y="29" fontSize="7" fontWeight="600" fill="#2a2a2a">EAP</text>
      </g>
    ),
  },
  {
    label: 'LibreOffice Calc',
    running: true,
    focus: true,
    art: (
      <g>
        {tile('#28b828')}
        <path d="M5.500 7.500h18v13h-18zM5.500 11.500h18M5.500 16h18M10 7.500v13M14.500 7.500v13M19 7.500v13" stroke="#fff" strokeWidth="1.600" fill="none" />
      </g>
    ),
  },
  {
    label: 'LibreOffice Writer',
    art: (
      <g>
        {tile('#1c75b0')}
        <path d="M5 8h10M5 12h18M5 16h18M5 20h18" stroke="#fff" strokeWidth="2" />
      </g>
    ),
  },
  {
    label: 'Telegram',
    art: (
      <g>
        <circle cx="14" cy="14" r="16" fill="#2fa3df" />
        <path d="M4 14L23 6l-4 17-6-5-2 4-1-6z" fill="#fff" />
        <path d="M10 16l9-7-7 9" fill="#a9cde5" />
      </g>
    ),
  },
];

export default function App() {
  return (
    <Desktop>
      <GlobalStyle />
      <TitleBar>
        <Title>ಕನರರa58_ಪಟeಬಲ.ಫoಡಸ - £iಬರeOಫಫi₢e Caಲ₢</Title>
        <WindowButtons>
          <WindowButton aria-label="Minimize">
            <svg width="8" height="3"><path d="M1 1h6v2H1z" fill="#3a3a3a" /></svg>
          </WindowButton>
          <WindowButton aria-label="Restore">
            <svg width="6" height="6"><path d="M2 0h4v4zM0 2v4h4z" fill="#3a3a3a" /></svg>
          </WindowButton>
          <WindowButton aria-label="Close">
            <svg width="14" height="14">
              <circle cx="7" cy="7" r="7" fill="#92b372" />
              <path d="M4.500 4.500l5 5M9.500 4.500l-5 5" stroke="#fff" strokeWidth="2" />
            </svg>
          </WindowButton>
        </WindowButtons>
      </TitleBar>
      <MenuBar>
        <MenuList>
          {menus.map((m) => (
            <MenuButton key={m}>{m}</MenuButton>
          ))}
        </MenuList>
        <CloseDocument aria-label="Close document">
          <svg width="8" height="8"><path d="M1 1l6 6M7 1L1 7" stroke="#222" strokeWidth="2.200" /></svg>
        </CloseDocument>
      </MenuBar>
      <Toolbar>
        <Handle />
        <Tools items={standardTools} />
      </Toolbar>
      <Toolbar>
        <Handle />
        <Gap $w={1} />
        <Combo $w={158}>
          <ComboInput aria-label="Font name" defaultValue="ಕaನನaಡa54" />
          <ComboArrow aria-label="Font list"><Caret big /></ComboArrow>
        </Combo>
        <Combo $w={82}>
          <ComboInput aria-label="Font size" defaultValue="20" />
          <ComboArrow aria-label="Size list"><Caret big /></ComboArrow>
        </Combo>
        <Gap $w={2} />
        <Tools items={formatTools} />
      </Toolbar>
      <SheetArea>
        <SheetView>
          <Sheet />
        </SheetView>
        <VScroll>
          <VSplit />
          <VThumb />
        </VScroll>
      </SheetArea>
      <HScroll>
        <HThumb />
        <HSplit />
      </HScroll>
      <TabBar>
        <TabNav>
          <TabNavButton aria-label="First sheet">
            <svg width="10" height="16"><path d="M0 1h1v14H0zM9 0v15L2 7.500z" fill="#222" /></svg>
          </TabNavButton>
          <TabNavButton aria-label="Previous sheet">
            <svg width="8" height="15"><path d="M8 0v15L0 7.500z" fill="#222" /></svg>
          </TabNavButton>
          <TabNavButton aria-label="Next sheet">
            <svg width="8" height="15"><path d="M0 0v15l8-7.500z" fill="#222" /></svg>
          </TabNavButton>
          <TabNavButton aria-label="Last sheet">
            <svg width="10" height="16"><path d="M9 1h1v14H9zM0 0v15l7-7.500z" fill="#222" /></svg>
          </TabNavButton>
          <TabNavButton aria-label="Add sheet" $w={38}>
            <svg width="17" height="17"><path d="M8.500 0v17M0 8.500h17" stroke="#222" strokeWidth="3" /></svg>
          </TabNavButton>
        </TabNav>
        {tabs.map(([name, w], i) => (
          <Tab key={name} $w={w} $active={i === 0}>
            {name}
          </Tab>
        ))}
      </TabBar>
      <Panel>
        <StartMenu>
          <svg width="31" height="31" viewBox="0 0 31 31" aria-hidden="true">
            {Array.from({ length: 8 }, (_, i) => (
              <path key={i} d="M12 7L14.500 0h2L19 7z" fill="#f0f0f0" transform={`rotate(${i * 45} 15.500 15.500)`} />
            ))}
            <circle cx="15.500" cy="15.500" r="8.500" fill="#2f2f2f" stroke="#f0f0f0" strokeWidth="3" />
          </svg>
          <PanelText>Meನu</PanelText>
        </StartMenu>
        <Launchers>
          {launchers.map((l, i) => (
            <Launcher key={i} aria-label={l.label} $running={l.running} $focus={l.focus}>
              <svg width="28" height="28" viewBox="0 0 28 28" overflow="visible" aria-hidden="true">
                {l.art}
              </svg>
            </Launcher>
          ))}
        </Launchers>
        <Tray>
          <PanelText>ಜi</PanelText>
          <TrayButton aria-label="Power">
            <svg width="15" height="15" fill="none" stroke="#f0f0f0" strokeWidth="2">
              <path d="M4.500 2.500c-6 4-3 11 3 11s9-7 3-11M7.500 0v8" />
            </svg>
          </TrayButton>
          <TrayButton aria-label="Updates">
            <svg width="17" height="17">
              <path d="M8 1c2 2 5 2 7 2 0 6-1 10-7 12C2 13 1 9 1 3c2 0 5 0 7-2z" fill="none" stroke="#f0f0f0" strokeWidth="1.500" />
              <path d="M8 4v9c-3-1-4-4-4-7 2 0 3-1 4-2z" fill="#f0f0f0" />
              <circle cx="13" cy="13" r="3.500" fill="#f5783c" />
            </svg>
          </TrayButton>
          <TrayButton aria-label="Network">
            <svg width="16" height="14" fill="none" strokeWidth="2">
              <path d="M1 5c4-5 10-5 14 0" stroke="#6a6a6a" />
              <path d="M3.500 8c3-3 6-3 9 0" stroke="#f0f0f0" />
              <path d="M5.500 10c2-1.500 3-1.500 5 0L8 13z" fill="#f0f0f0" />
            </svg>
          </TrayButton>
          <TrayButton aria-label="Volume">
            <svg width="16" height="14">
              <path d="M0 4h3l4-4v14l-4-4H0z" fill="#f0f0f0" />
              <path d="M9 4c2 2 2 4 0 6M11 2c3 3 3 7 0 10" stroke="#f0f0f0" strokeWidth="1.500" fill="none" />
              <path d="M13.500 1c3 4 3 8 0 12" stroke="#7a7a7a" fill="none" />
            </svg>
          </TrayButton>
          <TrayButton aria-label="Battery">
            <svg width="14" height="16">
              <path d="M1 2.500h3V1h4v1.500h3v12.500H1z" fill="none" stroke="#f0f0f0" strokeWidth="2" />
              <path d="M3.500 5h5v8h-5z" fill="#f0f0f0" />
              <path d="M11 7l-4 5h3l-2 4 6-6h-3z" fill="#9a9a9a" />
            </svg>
          </TrayButton>
          <PanelText>15 Weಡ,04:41</PanelText>
        </Tray>
      </Panel>
    </Desktop>
  );
}
